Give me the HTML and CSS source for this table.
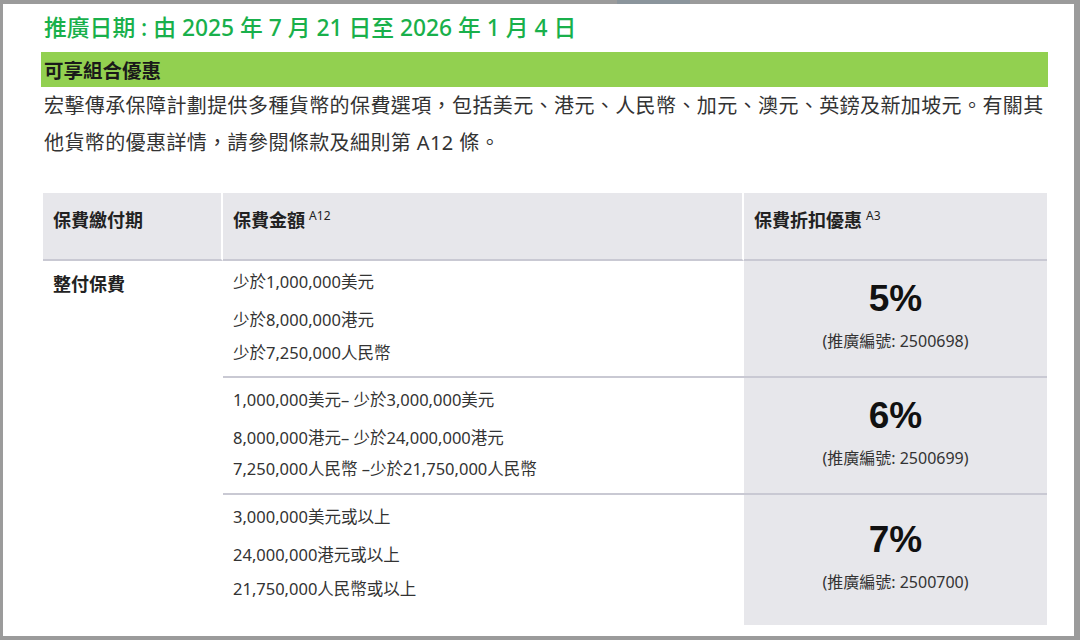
FILE: index.html
```html
<!DOCTYPE html>
<html lang="zh-Hant">
<head>
<meta charset="utf-8">
<title>推廣日期</title>
<link rel="stylesheet" href="styles.css">
</head>
<body>
<div class="frame">
  <div class="topstrip"><span class="tab"></span></div>
  <div class="panel">
    <h1 class="title">推廣日期 : 由 2025 年 7 月 21 日至 2026 年 1 月 4 日</h1>
    <div class="bar">可享組合優惠</div>
    <p class="intro">宏擊傳承保障計劃提供多種貨幣的保費選項，包括美元、港元、人民幣、加元、澳元、英鎊及新加坡元。有關其他貨幣的優惠詳情，請參閱條款及細則第 A12 條。</p>

    <div class="table">
      <div class="th th-sep">保費繳付期</div>
      <div class="th th-sep">保費金額 <sup>A12</sup></div>
      <div class="th">保費折扣優惠 <sup>A3</sup></div>

      <div class="term">整付保費</div>

      <div class="amt r1 row-line">
        <div class="l1">少於1,000,000美元</div>
        <div class="l2">少於8,000,000港元</div>
        <div class="l3">少於7,250,000人民幣</div>
      </div>
      <div class="disc row-line">
        <div class="pct">5%</div>
        <div class="code">(推廣編號: 2500698)</div>
      </div>

      <div class="amt r2 row-line">
        <div class="l1">1,000,000美元– 少於3,000,000美元</div>
        <div class="l2">8,000,000港元– 少於24,000,000港元</div>
        <div class="l3">7,250,000人民幣 –少於21,750,000人民幣</div>
      </div>
      <div class="disc row-line">
        <div class="pct">6%</div>
        <div class="code">(推廣編號: 2500699)</div>
      </div>

      <div class="amt r3">
        <div class="l1">3,000,000美元或以上</div>
        <div class="l2">24,000,000港元或以上</div>
        <div class="l3">21,750,000人民幣或以上</div>
      </div>
      <div class="disc">
        <div class="pct">7%</div>
        <div class="code">(推廣編號: 2500700)</div>
      </div>
    </div>
  </div>
  <div class="bottomstrip"></div>
</div>
</body>
</html>
```

FILE: styles.css
```css
* { box-sizing: border-box; }
html, body {
  margin: 0;
  padding: 0;
  background: #9b9b9b;
}
body {
  width: 1080px;
  height: 640px;
  overflow: hidden;
  font-family: "Noto Sans", "Noto Sans CJK TC", sans-serif;
  color: #333;
}
.frame {
  display: flex;
  flex-direction: column;
  width: 1080px;
  height: 640px;
  padding: 0 6px 0 3px;
}
.topstrip {
  height: 4px;
  flex: none;
  display: flex;
}
.tab {
  margin-left: 614px;
  width: 73px;
  height: 4px;
  background: #8b959c;
}
.bottomstrip {
  height: 4px;
  flex: none;
}
.panel {
  flex: 1;
  background: #fff;
  padding: 8px 26px 0 38px;
  display: flex;
  flex-direction: column;
}
.title {
  margin: 0 0 8px 0;
  padding-left: 3px;
  font-family: "Noto Sans", "Noto Sans CJK TC", sans-serif;
  font-size: 22.8px;
  line-height: 32px;
  font-weight: 500;
  color: #19b04b;
}
.bar {
  height: 35px;
  background: #92d050;
  padding: 3px 0 0 3px;
  font-family: "Noto Sans CJK TC", sans-serif;
  font-size: 19.5px;
  line-height: 30px;
  font-weight: 700;
  color: #1a1a1a;
}
.intro {
  margin: 0;
  padding-left: 3px;
  font-size: 20px;
  letter-spacing: 0.4px;
  line-height: 37px;
  color: #333;
}
.table {
  margin: 32px 0 0 2px;
  width: 1004px;
  display: grid;
  grid-template-columns: 180px 521px 303px;
  grid-template-rows: 68px auto auto auto;
}
.th {
  background: #e7e7eb;
  border-bottom: 2px solid #c9c9d3;
  padding: 12px 10px 0 10px;
  font-family: "Noto Sans CJK TC", sans-serif;
  font-size: 18px;
  line-height: 28px;
  font-weight: 700;
  color: #222;
}
.th-sep {
  border-right: 2px solid #fff;
}
.th sup {
  font-family: "Noto Sans", sans-serif;
  font-size: 12px;
  font-weight: 400;
  vertical-align: 7px;
  line-height: 0;
}
.term {
  grid-column: 1;
  grid-row: 2 / 5;
  padding: 10px 10px 0 10px;
  font-family: "Noto Sans CJK TC", sans-serif;
  font-size: 18px;
  line-height: 24px;
  font-weight: 700;
  color: #222;
}
.amt {
  grid-column: 2;
  padding: 10px 10px 12px 10px;
  font-size: 16.5px;
  line-height: 22px;
  color: #333;
}
.amt .l2 { margin-top: 16px; }
.amt .l3 { margin-top: 11px; }
.amt.r2 { padding-top: 11px; padding-bottom: 13px; }
.amt.r2 .l3 { margin-top: 9px; }
.amt.r3 { padding-top: 11px; padding-bottom: 25px; }
.amt.r3 .l3 { margin-top: 12px; }
.row-line {
  border-bottom: 2px solid #c9c9d3;
}
.disc {
  grid-column: 3;
  background: #e7e7eb;
  display: flex;
  flex-direction: column;
  align-items: center;
  justify-content: center;
  padding-bottom: 10px;
}
.pct {
  font-family: "Liberation Sans", Arial, sans-serif;
  font-weight: 700;
  font-size: 37px;
  line-height: 46px;
  color: #111;
}
.code {
  margin-top: 8px;
  font-size: 16px;
  line-height: 22px;
  color: #333;
}
```
